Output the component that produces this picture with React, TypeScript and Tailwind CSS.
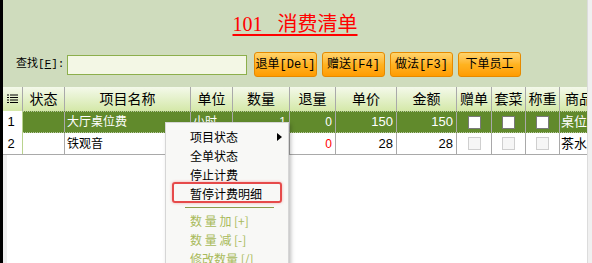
import React from 'react';

const cjk = '"Liberation Sans", "Noto Sans CJK SC", sans-serif';

type Row = {
  no: string;
  name: string;
  unit: string;
  qty: string;
  ret: string;
  price: string;
  amount: string;
  kind: string;
  selected?: boolean;
};

const rows: Row[] = [
  { no: '1', name: '大厅桌位费', unit: '小时', qty: '1', ret: '0', price: '150', amount: '150', kind: '桌位费', selected: true },
  { no: '2', name: '铁观音', unit: '壶', qty: '1', ret: '0', price: '28', amount: '28', kind: '茶水' },
];

function ListIcon() {
  return (
    <svg width="11" height="10" viewBox="0 0 11 10" className="text-black">
      {[1, 3.5, 6, 8.5].map((y) => (
        <g key={y}>
          <rect x="0" y={y - 0.5} width="2" height="1" fill="currentColor" />
          <rect x="3" y={y - 0.5} width="8" height="1" fill="currentColor" />
        </g>
      ))}
    </svg>
  );
}

function Check({ disabled }: { disabled?: boolean }) {
  return (
    <div
      className={
        disabled
          ? 'h-[13px] w-[13px] border border-[#cfcfcf] bg-[#f6f6f6]'
          : 'h-[13px] w-[13px] border border-[#7a7a7a] bg-white'
      }
    />
  );
}

function OrangeButton({ label }: { label: React.ReactNode }) {
  return (
    <button
      className="flex h-[25px] w-[63px] items-center justify-center whitespace-nowrap rounded-[3px] border border-[#e68a00] bg-gradient-to-b from-[#ffd46a] via-[#ffb320] to-[#ff9c00] text-[12px] text-black"
      style={{ fontFamily: '"Liberation Mono", "Noto Sans CJK SC", monospace' }}
    >
      {label}
    </button>
  );
}

function HeaderCell({ w, children }: { w: string; children?: React.ReactNode }) {
  return (
    <div className={`${w} flex h-full shrink-0 items-center justify-center overflow-hidden whitespace-nowrap border-r border-[#a9a9a9] text-[14px]`}>
      {children}
    </div>
  );
}

function MenuItem({ label, disabled, arrow }: { label: string; disabled?: boolean; arrow?: boolean }) {
  return (
    <div
      className={`relative flex h-[19px] items-center whitespace-nowrap pl-[24px] text-[12px] ${disabled ? 'text-[#a8ba5a]' : 'text-black'}`}
    >
      {label}
      {arrow && (
        <svg width="5" height="8" viewBox="0 0 5 8" className="absolute right-[6px] top-[6px]">
          <path d="M0 0 L5 4 L0 8 Z" fill="#000" />
        </svg>
      )}
    </div>
  );
}

export default function App() {
  return (
    <div className="relative flex h-[263px] w-[592px] overflow-hidden bg-white" style={{ fontFamily: cjk }}>
      <div className="w-[3px] shrink-0 bg-black" />

      <div className="flex w-[584px] shrink-0 flex-col">
        {/* top panel */}
        <div className="h-[87px] shrink-0 bg-[#cfdcbd]">
          <div className="flex h-[51px] justify-center pt-[13px]">
            <span
              className="whitespace-pre text-[20px] leading-[22px] text-[#ff0000] underline decoration-[1.5px] underline-offset-[3px]"
              style={{ fontFamily: '"Liberation Serif", "Noto Sans CJK SC", serif' }}
            >
              {'101\u00a0\u00a0\u00a0消费清单'}
            </span>
          </div>
          <div className="flex h-[27px] items-center pl-[13px]">
            <span
              className="w-[51px] shrink-0 whitespace-nowrap text-[11px] text-black"
              style={{ fontFamily: '"Liberation Mono", "Noto Sans CJK SC", monospace' }}
            >
              查找[<span className="underline">F</span>]:
            </span>
            <div className="h-[20px] w-[180px] shrink-0 border border-[#8caf4c] bg-[#f3f7e5]" />
            <div className="ml-[7px] flex gap-[5px]">
              <OrangeButton label="退单[Del]" />
              <OrangeButton label="赠送[F4]" />
              <OrangeButton label="做法[F3]" />
              <OrangeButton label="下单员工" />
            </div>
          </div>
        </div>

        {/* grid header */}
        <div className="flex h-[24px] shrink-0 bg-gradient-to-b from-[#f4f9ea] to-[#d4e8a8] text-black">
          <HeaderCell w="w-[20px]">
            <ListIcon />
          </HeaderCell>
          <HeaderCell w="w-[42px]">状态</HeaderCell>
          <HeaderCell w="w-[126px]">项目名称</HeaderCell>
          <HeaderCell w="w-[42px]">单位</HeaderCell>
          <HeaderCell w="w-[57px]">数量</HeaderCell>
          <HeaderCell w="w-[46px]">退量</HeaderCell>
          <HeaderCell w="w-[61px]">单价</HeaderCell>
          <HeaderCell w="w-[60px]">金额</HeaderCell>
          <HeaderCell w="w-[35px]">赠单</HeaderCell>
          <HeaderCell w="w-[34px]">套菜</HeaderCell>
          <HeaderCell w="w-[34px]">称重</HeaderCell>
          <div className="flex h-full flex-1 items-center overflow-hidden whitespace-nowrap pl-[5px] text-[14px]">商品类别</div>
        </div>

        {/* grid rows */}
        {rows.map((r) => {
          const cell = 'flex h-full shrink-0 items-center overflow-hidden whitespace-nowrap border-r border-[#a9a9a9]';
          return (
            <div
              key={r.no}
              className={
                r.selected
                  ? 'flex h-[22px] shrink-0 text-[12px] text-white'
                  : 'flex h-[22px] shrink-0 border-b border-[#a9a9a9] text-[12px] text-black'
              }
            >
              <div className={`${cell} w-[20px] justify-center border-[#b9d38e] bg-white pr-[3px] text-[13px] text-black`}>{r.no}</div>
              <div
                className={
                  r.selected
                    ? 'flex h-full flex-1 border-y border-dotted border-[#b8c8a0] bg-[#618a2c]'
                    : 'flex h-full flex-1'
                }
              >
                <div className={`${cell} w-[42px]`} />
                <div className={`${cell} w-[126px] pl-[2px]`}>{r.name}</div>
                <div className={`${cell} w-[42px] pl-[2px]`}>{r.unit}</div>
                <div className={`${cell} w-[57px] justify-end pr-[3px]`}>{r.qty}</div>
                <div className={`${cell} w-[46px] justify-end pr-[3px] ${r.selected ? '' : 'text-[#ff0000]'}`}>{r.ret}</div>
                <div className={`${cell} w-[61px] justify-end pr-[3px] text-[13px]`}>{r.price}</div>
                <div className={`${cell} w-[60px] justify-end pr-[3px] text-[13px]`}>{r.amount}</div>
                <div className={`${cell} w-[35px] justify-center`}>
                  <Check disabled={!r.selected} />
                </div>
                <div className={`${cell} w-[34px] justify-center`}>
                  <Check disabled={!r.selected} />
                </div>
                <div className={`${cell} w-[34px] justify-center`}>
                  <Check disabled={!r.selected} />
                </div>
                <div className="flex h-full flex-1 items-center overflow-hidden whitespace-nowrap pl-[1px] text-[13px]">{r.kind}</div>
              </div>
            </div>
          );
        })}

        <div className="flex-1 border-l-[4px] border-[#efefef] bg-white" />
      </div>

      <div className="w-[5px] shrink-0 border-l border-[#dcdcdc] bg-[#f0f0f0]" />

      {/* context menu */}
      <div
        className="absolute left-[165px] top-[122px] h-[160px] w-[124px] border border-[#d6d6d6] bg-[#f8f8f6] pt-[4px] shadow-[2px_2px_4px_rgba(0,0,0,0.25)]"
        style={{ fontFamily: '"Noto Sans CJK SC", sans-serif' }}
      >
        <MenuItem label="项目状态" arrow />
        <MenuItem label="全单状态" />
        <MenuItem label="停止计费" />
        <div className="relative">
          <div className="absolute -top-[2px] bottom-0 left-[6px] w-[110px] rounded-[3px] border-2 border-[#e64a4a] shadow-[0_0_3px_rgba(230,74,74,0.45)]" />
          <MenuItem label="暂停计费明细" />
        </div>
        <div className="flex h-[8px] items-center pl-[19px]">
          <div className="h-[1px] w-[89px] bg-[#8c9c4a]" />
        </div>
        <MenuItem label="数 量 加 [+]" disabled />
        <MenuItem label="数 量 减 [-]" disabled />
        <MenuItem label="修改数量 [/]" disabled />
      </div>
    </div>
  );
}
